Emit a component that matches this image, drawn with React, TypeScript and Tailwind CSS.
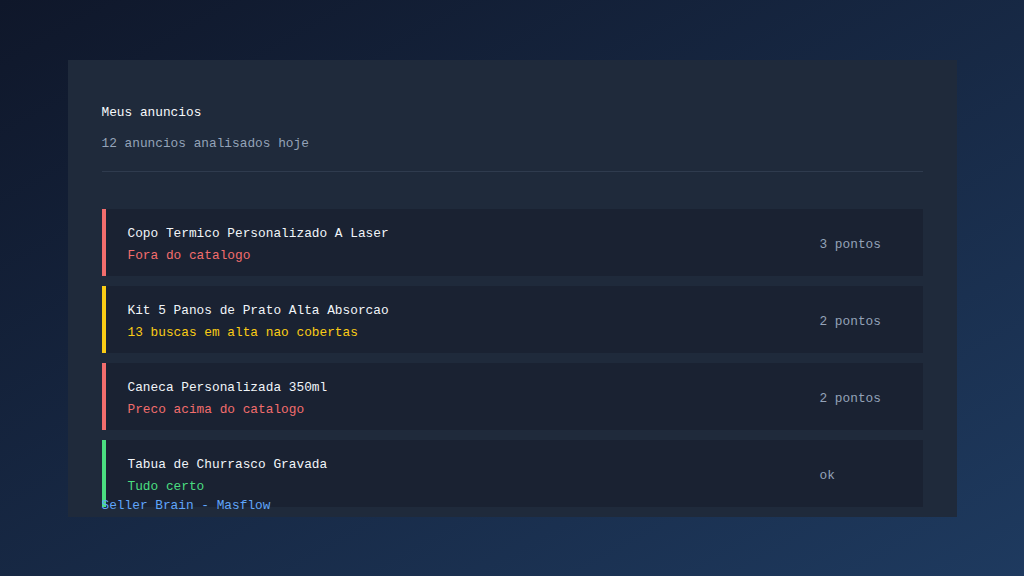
import React from "react";

type Listing = {
  title: string;
  status: string;
  score: string;
  bar: string;
  tone: string;
};

const listings: Listing[] = [
  {
    title: "Copo Termico Personalizado A Laser",
    status: "Fora do catalogo",
    score: "3 pontos",
    bar: "bg-[#f26d6d]",
    tone: "text-[#f26d6d]",
  },
  {
    title: "Kit 5 Panos de Prato Alta Absorcao",
    status: "13 buscas em alta nao cobertas",
    score: "2 pontos",
    bar: "bg-[#facc15]",
    tone: "text-[#facc15]",
  },
  {
    title: "Caneca Personalizada 350ml",
    status: "Preco acima do catalogo",
    score: "2 pontos",
    bar: "bg-[#f26d6d]",
    tone: "text-[#f26d6d]",
  },
  {
    title: "Tabua de Churrasco Gravada",
    status: "Tudo certo",
    score: "ok",
    bar: "bg-[#4ade80]",
    tone: "text-[#4ade80]",
  },
];

function ListingRow({ item }: { item: Listing }) {
  return (
    <div className="flex h-[67px] shrink-0 bg-[#1a2232]">
      <div className={`w-[4px] shrink-0 ${item.bar}`} />
      <div className="flex flex-1 flex-col pl-[22px] pt-[15px]">
        <div className="leading-[20px] text-[#f1f5f9]">{item.title}</div>
        <div className={`mt-[2px] leading-[20px] ${item.tone}`}>{item.status}</div>
      </div>
      <div className="flex w-[103px] shrink-0 items-center pr-[22px] pt-[5px] leading-[20px] text-[#94a3b8]">
        {item.score}
      </div>
    </div>
  );
}

export default function App() {
  return (
    <div
      className="flex h-[576px] w-[1024px] items-center justify-center bg-gradient-to-br from-[#0f172a] to-[#1e3a5f] text-[12.8px]"
      style={{ fontFamily: '"Liberation Mono", "DejaVu Sans Mono", monospace' }}
    >
      <div className="relative h-[457px] w-[889px] overflow-hidden bg-[#1f2a3b] px-[34px] pt-[43px]">
        <div className="border-b border-[#2f3b4e] pb-[17px]">
          <div className="leading-[20px] text-[#f8fafc]">Meus anuncios</div>
          <div className="mt-[11px] leading-[20px] text-[#94a3b8]">12 anuncios analisados hoje</div>
        </div>
        <div className="mt-[37px] flex flex-col gap-[10px]">
          {listings.map((item) => (
            <ListingRow key={item.title} item={item} />
          ))}
        </div>
        <div className="absolute bottom-[1px] left-[34px] leading-[20px] text-[#60a5fa]">
          Seller Brain - Masflow
        </div>
      </div>
    </div>
  );
}
